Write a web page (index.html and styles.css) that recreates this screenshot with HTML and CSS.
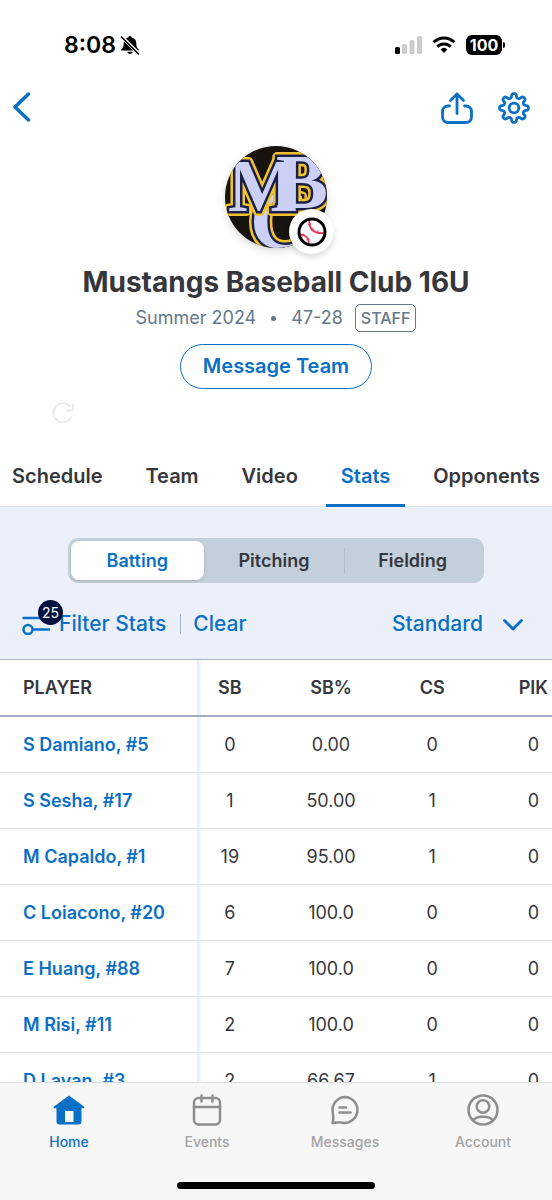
FILE: index.html
```html
<!DOCTYPE html>
<html lang="en">
<head>
  <meta charset="UTF-8">
  <meta name="viewport" content="width=device-width, initial-scale=1">
  <title>Mustangs Baseball Club 16U</title>
  <link rel="stylesheet" href="styles.css">
</head>
<body>
  <div class="status-bar">
    <div class="status-left">
      <span class="time">8:08</span>
      <svg class="bell" width="20" height="20" viewBox="0 0 20 20">
        <path d="M10 1c.9 0 1.600.6 1.700 1.400 2.900.7 4.600 2.900 4.600 5.600 0 3.800.7 4.800 2.300 6.200.5.5.2 1.300-.5 1.300H1.900c-.7 0-1-.8-.5-1.300C3 12.800 3.700 11.800 3.700 8c0-2.700 1.700-4.900 4.600-5.600C8.400 1.600 9.100 1 10 1z"/>
        <path d="M7.300 16.800h5.400c-.3 1.300-1.400 2.200-2.700 2.200s-2.400-.9-2.700-2.200z"/>
        <path d="M1.500 1.500l17 17" stroke="#fff" stroke-width="3.600"/>
        <path d="M1.500 2l17 17" stroke="#000" stroke-width="1.600" stroke-linecap="round"/>
      </svg>
    </div>
    <div class="status-right">
      <svg width="27" height="18" viewBox="0 0 27 18">
        <rect x="0" y="11" width="5" height="7" rx="1.500"/>
        <rect x="7" y="8" width="5" height="10" rx="1.500" fill="#ccc"/>
        <rect x="14.500" y="4" width="5" height="14" rx="1.500" fill="#ccc"/>
        <rect x="22" y="0" width="5" height="18" rx="1.500" fill="#ccc"/>
      </svg>
      <svg width="24" height="18" viewBox="0 0 24 18" fill="none" stroke="#000" stroke-width="3">
        <path d="M1.500 6.300a15 15 0 0 1 21 0"/>
        <path d="M5.300 10.600a9.600 9.600 0 0 1 13.400 0"/>
        <path d="M8.600 13.400a5 5 0 0 1 6.800 0L12 17z" fill="#000" stroke="none"/>
      </svg>
      <div class="battery">100</div>
    </div>
  </div>

  <header class="toolbar">
    <button class="icon-btn" aria-label="Back">
      <svg width="20" height="32" viewBox="0 0 20 32" fill="none" stroke="currentColor" stroke-width="3.500" stroke-linecap="round" stroke-linejoin="round">
        <path d="M16.500 2L3 15l13.500 13"/>
      </svg>
    </button>
    <div class="toolbar-right">
      <button class="icon-btn" aria-label="Share">
        <svg width="32" height="32" viewBox="0 0 32 32" fill="none" stroke="currentColor" stroke-width="2.800" stroke-linecap="round" stroke-linejoin="round">
          <path d="M16 21.500V2M9.500 8.500L16 2l6.500 6.500"/>
          <path d="M8.500 14H7a5.500 5.500 0 0 0-5.500 5.500V25A5.500 5.500 0 0 0 7 30.500h18a5.500 5.500 0 0 0 5.500-5.500v-5.500A5.500 5.500 0 0 0 25 14h-1.500"/>
        </svg>
      </button>
      <button class="icon-btn" aria-label="Settings">
        <svg width="32" height="32" viewBox="0 0 32 32" fill="none" stroke="currentColor" stroke-width="2.800" stroke-linejoin="round">
          <circle cx="16" cy="16" r="4.800"/>
          <path id="gear"/>
        </svg>
      </button>
    </div>
  </header>

  <section class="team">
    <div class="avatar">
      <svg class="logo" width="102" height="102" viewBox="0 0 102 102" role="img" aria-label="MBC">
        <defs>
          <clipPath id="round"><circle cx="51" cy="51" r="51"/></clipPath>
          <text id="letter-c" x="25" y="102" font-size="82">C</text>
          <text id="letter-m" x="3" y="65" font-size="74">M</text>
          <text id="letter-b" x="51" y="62" font-size="78">B</text>
        </defs>
        <g clip-path="url(#round)">
          <rect width="102" height="102" fill="#17130f"/>
          <use href="#letter-c" class="logo-gold"/>
          <use href="#letter-c" class="logo-navy"/>
          <use href="#letter-c" class="logo-fill"/>
          <use href="#letter-m" class="logo-gold"/>
          <use href="#letter-b" class="logo-gold"/>
          <use href="#letter-b" class="logo-navy"/>
          <use href="#letter-m" class="logo-navy"/>
          <use href="#letter-m" class="logo-fill"/>
          <use href="#letter-b" class="logo-fill"/>
        </g>
      </svg>
      <div class="sport">
        <svg width="30" height="30" viewBox="0 0 30 30" fill="none">
          <path d="M12.500 2.500c-1 9 4 14.500 14 13.500M3 17.500c5.500 0 9 3.500 9 9.500" stroke="#e8395a" stroke-width="1.800"/>
          <path d="M14 7l-3 .5M16.500 11.500l-2.500 2M21 13.500l-.5 3M6.500 16.500l-1 3M12.500 21.500l-3 1.500" stroke="#e8395a" stroke-width="1.300"/>
          <circle cx="15" cy="15" r="13" stroke="#000" stroke-width="3"/>
        </svg>
      </div>
    </div>
    <h1>Mustangs Baseball Club 16U</h1>
    <div class="team-info">
      <span>Summer 2024</span>
      <span class="dot"></span>
      <span>47-28</span>
      <span class="role">STAFF</span>
    </div>
    <button class="message-btn">Message Team</button>
    <svg class="refresh" width="24" height="24" viewBox="0 0 24 24" fill="none" stroke="#ebebeb" stroke-width="2">
      <path d="M20.500 15.500A9.500 9.500 0 1 1 19 5.500"/>
      <path d="M22 3v6.500h-6.500"/>
    </svg>
  </section>

  <nav class="tabs">
    <a href="#">Schedule</a>
    <a href="#">Team</a>
    <a href="#">Video</a>
    <a href="#" class="active">Stats</a>
    <a href="#">Opponents</a>
  </nav>

  <section class="filters">
    <div class="segmented">
      <button class="active">Batting</button>
      <button>Pitching</button>
      <button>Fielding</button>
    </div>
    <div class="filter-row">
      <button class="link-btn filter-btn">
        <span class="filter-icon">
          <svg width="32" height="22" viewBox="0 0 32 22" fill="none" stroke="currentColor" stroke-width="2.500" stroke-linecap="round">
            <path d="M1.500 5H20M12 16.500h15"/>
            <circle cx="6" cy="16.500" r="4.500"/>
          </svg>
          <span class="count">25</span>
        </span>
        Filter Stats
      </button>
      <span class="divider"></span>
      <button class="link-btn">Clear</button>
      <div class="view">
        <select aria-label="Stats view">
          <option>Standard</option>
        </select>
        <svg width="20" height="12" viewBox="0 0 20 12" fill="none" stroke="currentColor" stroke-width="2.800" stroke-linecap="round" stroke-linejoin="round">
          <path d="M1.500 1.500L10 10l8.500-8.500"/>
        </svg>
      </div>
    </div>
  </section>

  <main class="stats">
    <table>
      <colgroup>
        <col class="col-player">
        <col class="col-count">
        <col class="col-rate">
        <col class="col-count">
        <col class="col-rate">
      </colgroup>
      <thead>
        <tr><th>PLAYER</th><th>SB</th><th>SB%</th><th>CS</th><th>PIK</th></tr>
      </thead>
      <tbody>
        <tr><td><a href="#">S Damiano, #5</a></td><td>0</td><td>0.00</td><td>0</td><td>0</td></tr>
        <tr><td><a href="#">S Sesha, #17</a></td><td>1</td><td>50.00</td><td>1</td><td>0</td></tr>
        <tr><td><a href="#">M Capaldo, #1</a></td><td>19</td><td>95.00</td><td>1</td><td>0</td></tr>
        <tr><td><a href="#">C Loiacono, #20</a></td><td>6</td><td>100.0</td><td>0</td><td>0</td></tr>
        <tr><td><a href="#">E Huang, #88</a></td><td>7</td><td>100.0</td><td>0</td><td>0</td></tr>
        <tr><td><a href="#">M Risi, #11</a></td><td>2</td><td>100.0</td><td>0</td><td>0</td></tr>
        <tr><td><a href="#">D Layan, #3</a></td><td>2</td><td>66.67</td><td>1</td><td>0</td></tr>
      </tbody>
    </table>
  </main>

  <footer class="bottom-bar">
    <nav class="bottom-nav">
      <a href="#" class="active">
        <svg width="32" height="32" viewBox="0 0 32 32">
          <path d="M16 1.500L31 12.500c.8.600.4 1.800-.6 1.800H28.500V27.500a3 3 0 0 1-3 3h-19a3 3 0 0 1-3-3V14.300H1.600c-1 0-1.400-1.200-.6-1.800z" fill="currentColor"/>
          <rect x="12" y="17" width="8.500" height="11" fill="#f7f8fa"/>
        </svg>
        <span>Home</span>
      </a>
      <a href="#">
        <svg width="32" height="32" viewBox="0 0 32 32" fill="none" stroke="#8e8e8e" stroke-width="2.500" stroke-linecap="round">
          <rect x="3" y="4" width="26" height="26.500" rx="4.500"/>
          <path d="M3 13h26M10.500 1.500v6M21.500 1.500v6"/>
        </svg>
        <span>Events</span>
      </a>
      <a href="#">
        <svg width="32" height="32" viewBox="0 0 32 32" fill="none" stroke="#8e8e8e" stroke-width="2.500" stroke-linecap="round" stroke-linejoin="round">
          <path d="M16.500 3A13 13 0 1 1 12 28.500c-1.500-.8-4.500.8-8.500.5 1.500-3.500.5-7.500.3-10.500A13 13 0 0 1 16.500 3z"/>
          <path d="M10.500 13.500h6.500M10.500 18.500h11"/>
        </svg>
        <span>Messages</span>
      </a>
      <a href="#">
        <svg width="32" height="32" viewBox="0 0 32 32" fill="none" stroke="#8e8e8e" stroke-width="2.500">
          <circle cx="16" cy="16" r="14.500"/>
          <circle cx="16" cy="12.500" r="6.300"/>
          <path d="M6.500 26.500c1-3 4-3.800 9.500-3.800s8.500.8 9.500 3.800"/>
        </svg>
        <span>Account</span>
      </a>
    </nav>
    <div class="home-indicator"></div>
  </footer>

  <script src="script.js"></script>
</body>
</html>
```

FILE: styles.css
```css
* {
  box-sizing: border-box;
}

body {
  margin: 0;
  height: 100vh;
  display: flex;
  flex-direction: column;
  overflow: hidden;
  font-family: Inter, "Liberation Sans", sans-serif;
  font-size: 18px;
  line-height: 24px;
  color: #36373c;
  background-color: #fff;
}

svg {
  display: block;
}

a {
  color: inherit;
  text-decoration: none;
}

button,
select {
  font: inherit;
  color: inherit;
  background: none;
  border: none;
  padding: 0;
  cursor: pointer;
}

.status-bar {
  display: flex;
  justify-content: space-between;
  align-items: center;
  padding: 33px 50px 0 64px;
  color: #000;
}

.status-left,
.status-right {
  display: flex;
  align-items: center;
}

.status-left {
  gap: 4px;
}

.status-right {
  gap: 10px;
}

.time {
  font-size: 23px;
  font-weight: 600;
}

.battery {
  position: relative;
  width: 36px;
  height: 20px;
  border-radius: 6px;
  background-color: #000;
  color: #fff;
  font-size: 16px;
  font-weight: 700;
  line-height: 20px;
  text-align: center;
}

.battery::after {
  content: "";
  position: absolute;
  left: 37px;
  top: 7px;
  width: 2px;
  height: 6px;
  border-radius: 0 2px 2px 0;
  background-color: #000;
}

.toolbar {
  display: flex;
  justify-content: space-between;
  align-items: center;
  padding: 35px 22px 0 12px;
  color: #0a70c6;
}

.toolbar-right {
  display: flex;
  gap: 25px;
}

.team {
  position: relative;
  display: flex;
  flex-direction: column;
  align-items: center;
  padding: 22px 16px 58px;
}

.avatar {
  position: relative;
  border-radius: 50%;
  box-shadow: 0 3px 8px rgba(0, 0, 0, 0.15);
}

.logo {
  font-family: "Liberation Serif", serif;
  font-weight: 700;
}

.logo-gold {
  fill: #f2c230;
  stroke: #f2c230;
  stroke-width: 10;
  stroke-linejoin: round;
}

.logo-navy {
  fill: #1b2048;
  stroke: #1b2048;
  stroke-width: 5;
}

.logo-fill {
  fill: #ccd0f5;
}

.sport {
  position: absolute;
  right: -7px;
  bottom: -6px;
  width: 45px;
  height: 45px;
  display: flex;
  align-items: center;
  justify-content: center;
  border-radius: 50%;
  background-color: #fff;
  box-shadow: 0 3px 6px rgba(0, 0, 0, 0.15);
}

h1 {
  margin: 18px 0 6px;
  font-size: 28px;
  font-weight: 700;
  line-height: 32px;
}

.team-info {
  display: flex;
  align-items: center;
  color: #64788b;
}

.dot {
  width: 5px;
  height: 5px;
  margin: 0 15px;
  border-radius: 50%;
  background-color: #64788b;
}

.role {
  margin-left: 12px;
  padding: 1px 5px;
  border: 1px solid #64788b;
  border-radius: 5px;
  font-size: 16px;
  font-weight: 500;
}

.message-btn {
  margin-top: 12px;
  padding: 9px 22px;
  border: 1px solid #0a70c6;
  border-radius: 23px;
  font-size: 20px;
  font-weight: 600;
  line-height: 25px;
  color: #0a70c6;
}

.refresh {
  position: absolute;
  left: 51px;
  bottom: 22px;
}

.tabs {
  display: flex;
  justify-content: space-between;
  padding: 0 12px;
  border-bottom: 1px solid #dfe4ec;
  font-size: 20px;
  font-weight: 600;
}

.tabs a {
  position: relative;
  padding: 17px 0 18px;
}

.tabs .active {
  color: #0a70c6;
}

.tabs .active::after {
  content: "";
  position: absolute;
  left: -15px;
  right: -15px;
  bottom: -1px;
  height: 3px;
  background-color: #0a70c6;
}

.filters {
  padding: 31px 29px 23px 22px;
  border-bottom: 1px solid #a9b6cc;
  background-color: #ebf0fa;
}

.segmented {
  display: grid;
  grid-template-columns: 32fr 34fr 33fr;
  margin: 0 39px 0 46px;
  padding: 3px;
  border-radius: 10px;
  background-color: #c3cfdb;
}

.segmented button {
  padding: 8px 0;
  border-radius: 8px;
  font-weight: 600;
  line-height: 23px;
}

.segmented .active {
  color: #0a70c6;
  background-color: #fff;
  box-shadow: 0 1px 3px rgba(0, 0, 0, 0.15);
}

.segmented button:last-child {
  border-radius: 0;
  background: linear-gradient(#b0bcca, #b0bcca) 0 center / 1px 26px no-repeat;
}

.filter-row {
  display: flex;
  align-items: center;
  margin-top: 29px;
  font-size: 21px;
  color: #0a70c6;
}

.link-btn {
  font-weight: 500;
}

.filter-btn {
  display: flex;
  align-items: center;
}

.filter-icon {
  position: relative;
  width: 37px;
}

.count {
  position: absolute;
  left: 16px;
  top: -13px;
  width: 25px;
  height: 25px;
  border-radius: 50%;
  background-color: #03123f;
  color: #fff;
  font-size: 14px;
  font-weight: 400;
  line-height: 25px;
  text-align: center;
}

.divider {
  width: 1px;
  height: 20px;
  margin: 0 12px 0 14px;
  background-color: #a9b6cc;
}

.view {
  position: relative;
  margin-left: auto;
}

.view select {
  appearance: none;
  padding-right: 40px;
  font-weight: 500;
}

.view svg {
  position: absolute;
  right: 0;
  top: 7px;
  pointer-events: none;
}

.stats {
  flex: 1;
  min-height: 0;
  overflow: hidden;
}

table {
  width: 602px;
  min-width: 100%;
  table-layout: fixed;
  border-collapse: separate;
  border-spacing: 0;
}

.col-player {
  width: 197px;
}

.col-count {
  width: 65px;
}

.col-rate {
  width: 137px;
}

th,
td {
  height: 56px;
  padding: 0;
  border-bottom: 1px solid #dfe3ea;
  text-align: center;
}

th {
  height: 57px;
  border-bottom: 2px solid #a3b1c2;
  font-weight: 600;
}

th:first-child,
td:first-child {
  padding-left: 23px;
  text-align: left;
}

th:nth-child(2),
td:nth-child(2) {
  background: linear-gradient(to right, #e4ecf6, #f4f8fc) left / 4px 100% no-repeat;
}

td a {
  font-weight: 600;
  color: #0a70c6;
}

.bottom-bar {
  position: relative;
  padding: 11px 0;
  border-top: 1px solid #dcdfe3;
  background-color: #f7f7f8;
}

.bottom-nav {
  display: grid;
  grid-template-columns: repeat(4, 1fr);
}

.bottom-nav a {
  display: flex;
  flex-direction: column;
  align-items: center;
  gap: 6px;
  color: #a3a3a3;
  font-size: 14px;
  font-weight: 500;
  line-height: 20px;
}

.bottom-nav .active {
  color: #0a70c6;
}

.home-indicator {
  width: 198px;
  height: 7px;
  margin: 30px auto 0;
  border-radius: 4px;
  background-color: #000;
}
```

FILE: script.js
```js
// Gear outline: radius follows a wave with eight teeth
const teeth = 8;
let d = '';
for (let i = 0; i <= 360; i += 3) {
  const a = i * Math.PI / 180;
  const wave = Math.tanh(2 * Math.cos(teeth * a)) / Math.tanh(2);
  const r = 12.4 + 2 * wave;
  d += (i ? 'L' : 'M') + (16 + r * Math.sin(a)).toFixed(2) + ' ' + (16 - r * Math.cos(a)).toFixed(2);
}
document.getElementById('gear').setAttribute('d', d + 'z');
```
